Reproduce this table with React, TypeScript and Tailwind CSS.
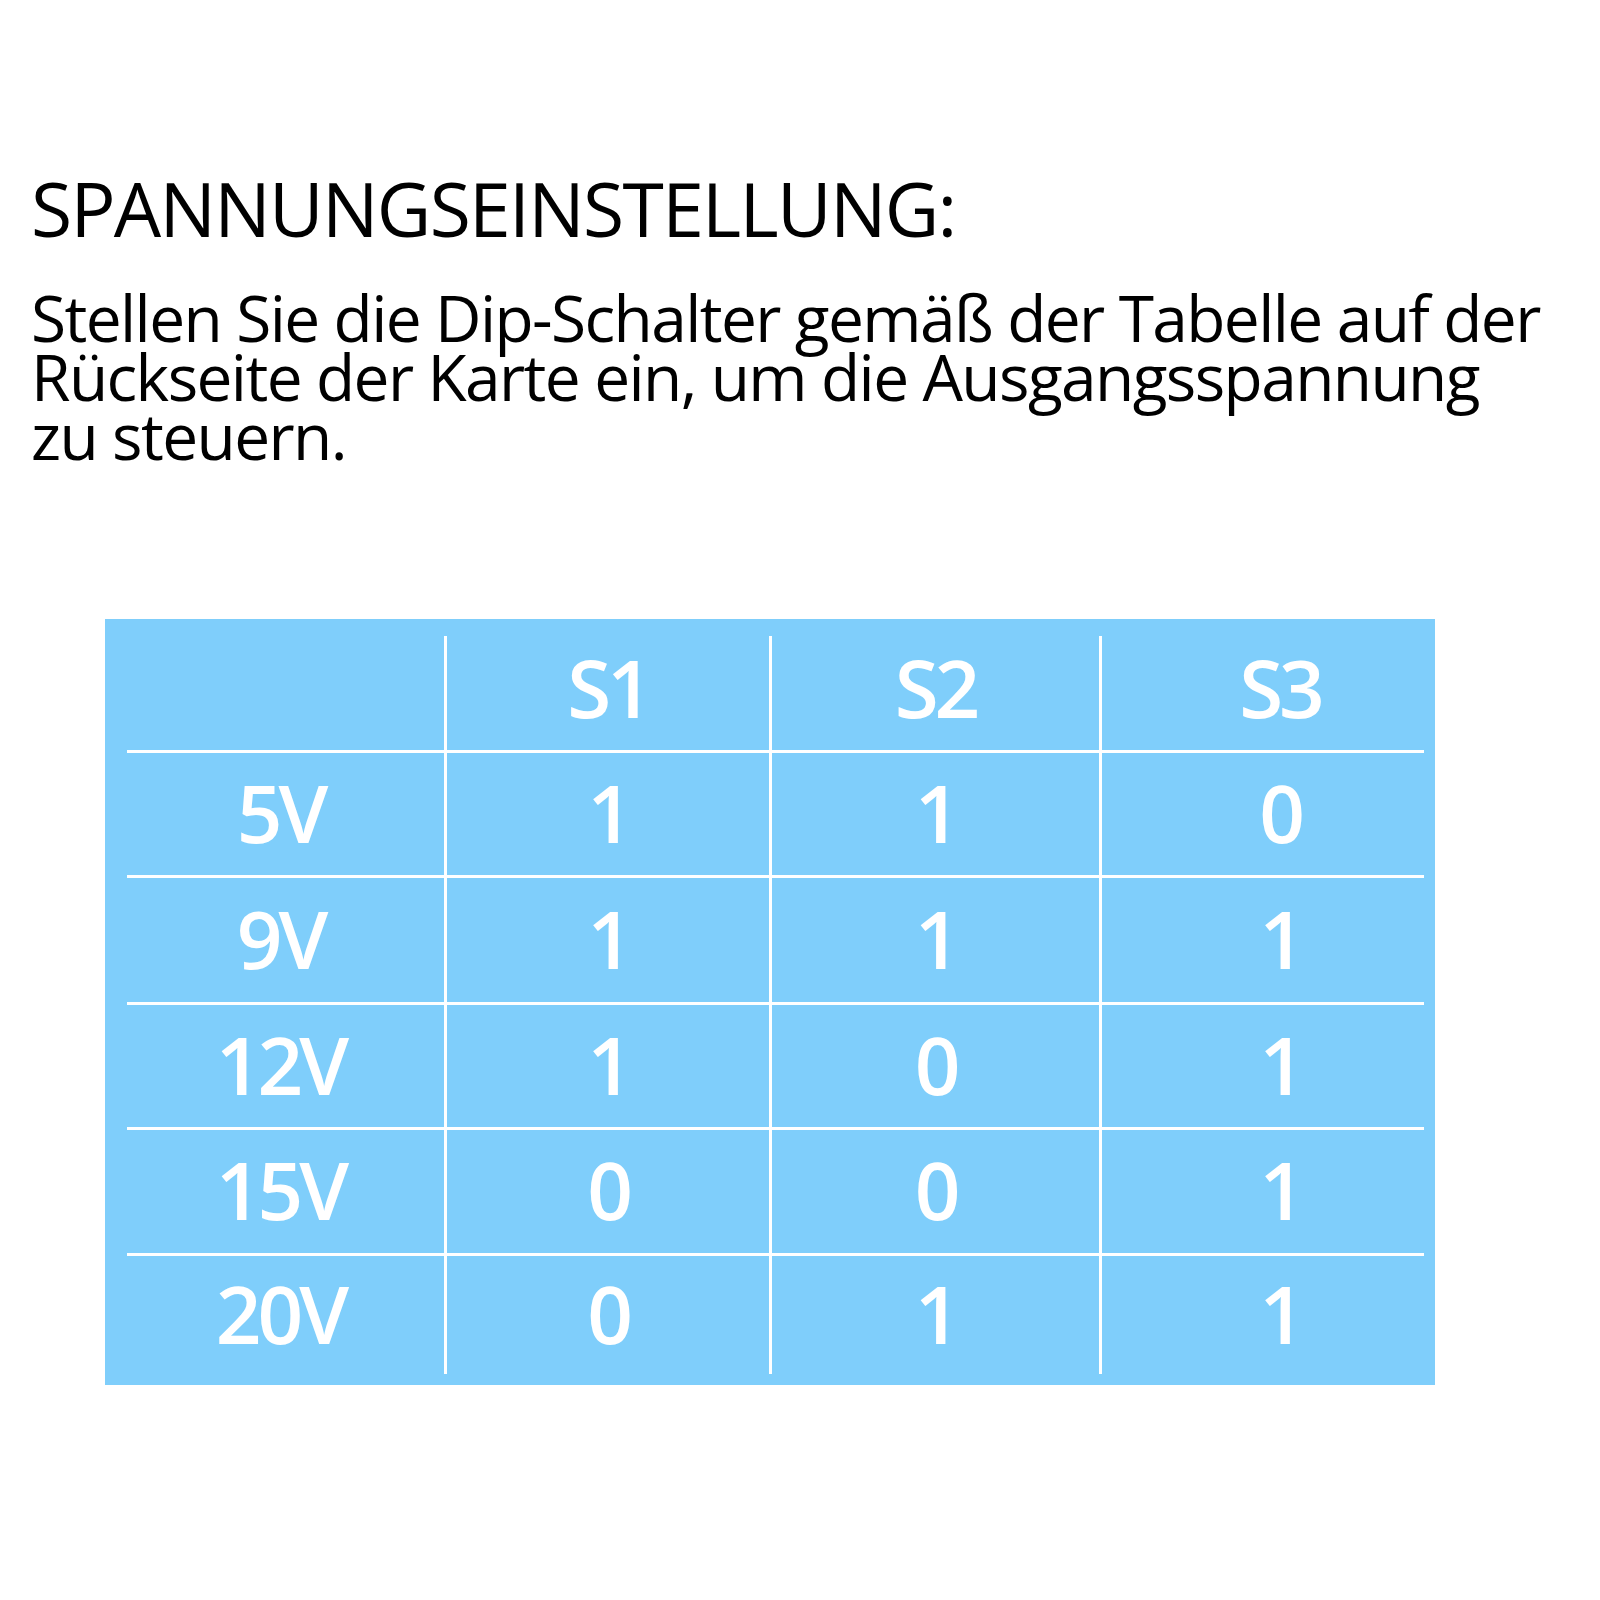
import React from "react";

const rows: [string, string, string, string][] = [
  ["5V", "1", "1", "0"],
  ["9V", "1", "1", "1"],
  ["12V", "1", "0", "1"],
  ["15V", "0", "0", "1"],
  ["20V", "0", "1", "1"],
];

function cellClass(i: number, top: boolean) {
  const base =
    "border-white flex items-center justify-center " + (top ? "pb-[5px]" : "pb-[12px]");
  if (i === 0) return top ? "border-t-[3px] pr-[10px] " + base : "pr-[10px] " + base;
  if (i === 3)
    return top
      ? "border-t-[3px] border-l-[3px] pl-[34px] " + base
      : "border-l-[3px] pl-[34px] " + base;
  return top ? "border-t-[3px] border-l-[3px] " + base : "border-l-[3px] " + base;
}

export default function App() {
  return (
    <div
      className="w-[1600px] h-[1600px] bg-white text-black"
      style={{ fontFamily: '"Open Sans", "Noto Sans", sans-serif' }}
    >
      <div className="pl-[31px] pt-[171px]">
        <h1 className="text-[75px] leading-none font-normal tracking-[-1.7px] whitespace-nowrap">
          SPANNUNGSEINSTELLUNG:
        </h1>
        <p className="mt-[42px] text-[64px] leading-[59px] tracking-[-1.6px] whitespace-nowrap">
          Stellen Sie die Dip-Schalter gemäß der Tabelle auf der
          <br />
          Rückseite der Karte ein, um die Ausgangsspannung
          <br />
          zu steuern.
        </p>
      </div>
      <div className="ml-[105px] mt-[154px] w-[1330px] h-[766px] bg-[#7fcefb] pt-[17px] pl-[22px] pr-[11px] pb-[11px]">
        <div className="grid grid-cols-[317px_325px_330px_325px] grid-rows-[114px_125px_127px_125px_126px_121px] text-white font-semibold text-[80px] leading-none tracking-[-4px]">
          <div className={cellClass(0, false)} />
          {["S1", "S2", "S3"].map((h, i) => (
            <div key={h} className={cellClass(i + 1, false)}>
              {h}
            </div>
          ))}
          {rows.map((r) =>
            r.map((c, i) => (
              <div key={r[0] + i} className={cellClass(i, true)}>
                {c}
              </div>
            ))
          )}
        </div>
      </div>
    </div>
  );
}
